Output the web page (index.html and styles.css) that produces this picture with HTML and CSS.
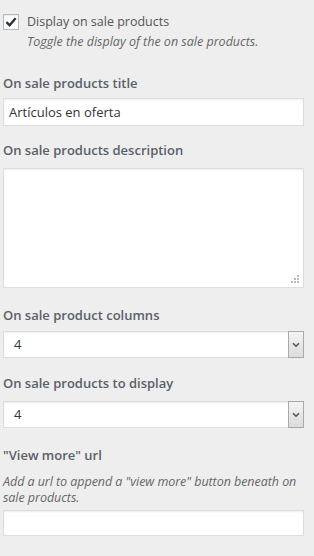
FILE: index.html
```html
<!DOCTYPE html>
<html>
<head>
<meta charset="utf-8">
<link rel="stylesheet" href="styles.css">
</head>
<body>
<div class="panel">
  <div class="check-row">
    <span class="checkbox">
      <svg width="14" height="14" viewBox="0 0 14 14"><path d="M2.5 7.2 L5.6 10.3 L11.6 3.2" fill="none" stroke="#2c3338" stroke-width="2.4" stroke-linejoin="miter"/></svg>
    </span>
    <div class="check-text">
      <div class="check-label">Display on sale products</div>
      <div class="desc">Toggle the display of the on sale products.</div>
    </div>
  </div>

  <div class="field f-title">
    <div class="label">On sale products title</div>
    <div class="input">Artículos en oferta</div>
  </div>

  <div class="field f-desc">
    <div class="label">On sale products description</div>
    <div class="textarea">
      <svg class="grip" width="8" height="8" viewBox="0 0 8 8"><rect x="6" y="0" width="2" height="2" fill="#bbb"/><rect x="3" y="3" width="2" height="2" fill="#bbb"/><rect x="6" y="3" width="2" height="2" fill="#bbb"/><rect x="0" y="6" width="2" height="2" fill="#bbb"/><rect x="3" y="6" width="2" height="2" fill="#bbb"/><rect x="6" y="6" width="2" height="2" fill="#bbb"/></svg>
    </div>
  </div>

  <div class="field f-cols">
    <div class="label">On sale product columns</div>
    <div class="select"><span class="value">4</span><span class="arrow"><svg width="8" height="6" viewBox="0 0 8 6"><path d="M1 1.2 L4 4.2 L7 1.2" fill="none" stroke="#555" stroke-width="1.6"/></svg></span></div>
  </div>

  <div class="field f-count">
    <div class="label">On sale products to display</div>
    <div class="select"><span class="value">4</span><span class="arrow"><svg width="8" height="6" viewBox="0 0 8 6"><path d="M1 1.2 L4 4.2 L7 1.2" fill="none" stroke="#555" stroke-width="1.6"/></svg></span></div>
  </div>

  <div class="field f-url">
    <div class="label">"View more" url</div>
    <div class="desc url-desc">Add a url to append a "view more" button beneath on sale products.</div>
    <div class="input short"></div>
  </div>
</div>
</body>
</html>
```

FILE: styles.css
```css
html, body {
  margin: 0;
  padding: 0;
  background: #eeeeee;
}
body {
  font-family: "Open Sans", "Noto Sans", sans-serif;
  color: #444;
  width: 314px;
  height: 556px;
  overflow: hidden;
}
.panel {
  padding: 12px 10px 0 3px;
  display: flex;
  flex-direction: column;
}
.check-row {
  display: flex;
  gap: 8px;
  align-items: flex-start;
}
.checkbox {
  width: 14px;
  height: 14px;
  margin-top: 2px;
  border: 1px solid #b4b9be;
  background: #fff;
  box-shadow: inset 0 1px 2px rgba(0,0,0,0.1);
  display: flex;
  align-items: center;
  justify-content: center;
  flex: none;
}
.check-label {
  font-size: 12.5px;
  line-height: 20px;
  color: #555;
}
.desc {
  font-size: 12.5px;
  line-height: 20px;
  font-style: italic;
  color: #666;
}
.label {
  font-size: 13px;
  font-weight: 600;
  line-height: 20px;
  color: #5a6068;
}
.field {
  display: flex;
  flex-direction: column;
}
.f-title { margin-top: 21px; }
.f-title .label { margin-bottom: 5px; }
.f-desc { margin-top: 14px; }
.f-desc .label { margin-bottom: 8px; }
.f-cols { margin-top: 17px; }
.f-cols .label { margin-bottom: 6px; }
.f-count { margin-top: 15px; }
.f-count .label { margin-bottom: 8px; }
.f-url { margin-top: 17px; }
.url-desc { line-height: 16px; margin-top: 9px; margin-bottom: 4px; letter-spacing: -0.05px; }

.input {
  height: 26px;
  border: 1px solid #ddd;
  background: #fff;
  box-shadow: inset 0 1px 2px rgba(0,0,0,0.07);
  font-size: 13px;
  line-height: 26px;
  padding: 0 5px;
  color: #333;
}
.input.short { height: 24px; }
.textarea {
  position: relative;
  height: 118px;
  border: 1px solid #ddd;
  background: #fff;
  box-shadow: inset 0 1px 2px rgba(0,0,0,0.07);
}
.grip {
  position: absolute;
  right: 4px;
  bottom: 4px;
}
.select {
  height: 25px;
  border: 1px solid #ddd;
  background: #fff;
  box-shadow: inset 0 1px 2px rgba(0,0,0,0.07);
  display: flex;
  align-items: stretch;
  justify-content: space-between;
}
.select .value {
  font-size: 13px;
  line-height: 25px;
  padding-left: 10px;
  color: #333;
}
.select .arrow {
  width: 14px;
  border: 1px solid #a9a9a9;
  margin: -1px -1px -1px 0;
  background: linear-gradient(#f4f4f4, #dcdcdc);
  display: flex;
  align-items: center;
  justify-content: center;
}
```
